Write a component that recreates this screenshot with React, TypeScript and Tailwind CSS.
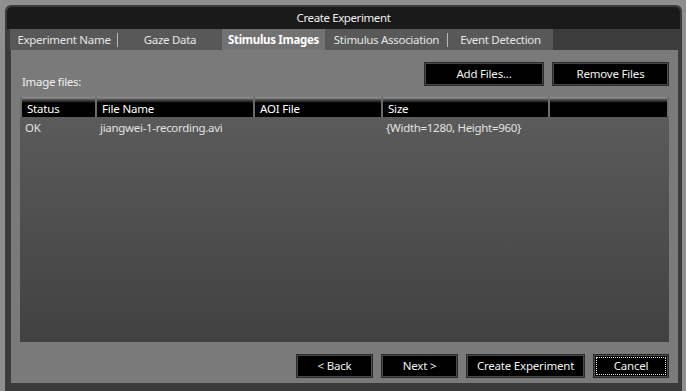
import React from "react";

const tabs = [
  { label: "Experiment Name", w: "w-[108px]", sep: true },
  { label: "Gaze Data", w: "w-[104px]", sep: false },
  { label: "Stimulus Images", w: "w-[103px]", sep: false, active: true },
  { label: "Stimulus Association", w: "w-[123px]", sep: true },
  { label: "Event Detection", w: "w-[105px]", sep: false },
];

const columns = [
  { label: "Status", w: "w-[75px]" },
  { label: "File Name", w: "w-[158px]" },
  { label: "AOI File", w: "w-[128px]" },
  { label: "Size", w: "w-[167px]" },
  { label: "", w: "flex-1" },
];

const DarkButton = ({ label, w, focused }: { label: string; w: string; focused?: boolean }) => (
  <button
    type="button"
    className={`relative ${w} h-[24px] bg-black border border-[#2a2a2a] shadow-[inset_0_0_0_1px_#4a4a4a] text-[11.5px] tracking-[-0.2px] text-[#f2f2f2] leading-none`}
  >
    {label}
    {focused && <span className="absolute inset-[2px] border border-dotted border-[#e0e0e0]" />}
  </button>
);

const App = () => {
  return (
    <div
      className="w-[686px] h-[391px] bg-[#8f8f8f] pt-[5px] pl-[5px] overflow-hidden"
      style={{ fontFamily: '"Noto Sans", "Open Sans", sans-serif' }}
    >
      <div className="w-[677px] h-[386px] bg-[#3b3b3b] rounded-t-[6px] flex flex-col pt-[2px] px-[2px]">
        {/* title bar */}
        <div className="h-[22px] bg-[#1a1a1a] rounded-t-[5px] flex items-center justify-center text-[11.5px] text-[#f0f0f0] tracking-[-0.4px]">
          Create Experiment
        </div>

        {/* tabs */}
        <div className="h-[21px] flex pl-[3px] bg-[#3c3c3c]">
          {tabs.map((t) => (
            <div
              key={t.label}
              className={`${t.w} h-full flex items-center justify-center relative text-[11.5px] tracking-[-0.3px] ${
                t.active ? "bg-[#727272] font-bold text-white" : "bg-[#585858] text-[#e6e6e6]"
              }`}
            >
              {t.label}
              {t.sep && <span className="absolute right-0 top-[4px] h-[14px] w-px bg-[#b8b8b8]" />}
            </div>
          ))}
        </div>

        {/* content panel */}
        <div className="w-[667px] ml-[4px] h-[333px] bg-[#7a7a7a] flex flex-col px-[9px] pt-[12px]">
          <div className="h-[23px] flex">
            <div className="mt-[12px] leading-[16px] text-[11.5px] tracking-[-0.3px] text-[#f0f0f0] pl-[2px]">Image files:</div>
            <div className="ml-auto flex gap-[8px]">
              <DarkButton label="Add Files..." w="w-[120px]" />
              <DarkButton label="Remove Files" w="w-[117px]" />
            </div>
          </div>

          {/* list */}
          <div className="mt-[12px] h-[245px] flex flex-col bg-[linear-gradient(to_bottom,#5d5d5d,#414141)]">
            <div className="h-[20px] flex bg-[linear-gradient(to_bottom,#9a9a9a_0px,#4a4a4a_3px,#000_6px,#000_100%)]">
              {columns.map((c, i) => (
                <div
                  key={i}
                  className={`${c.w} h-full flex items-center pl-[5px] text-[11.5px] tracking-[-0.2px] text-white border-l-2 border-[#6c6c6c] ${
                    i === columns.length - 1 ? "border-r-2" : ""
                  }`}
                >
                  <span className="mt-[3px]">{c.label}</span>
                </div>
              ))}
            </div>
            <div className="h-[22px] flex items-center text-[11.5px] tracking-[-0.3px] text-[#e2e2e2]">
              <div className="w-[75px] pl-[5px]">OK</div>
              <div className="w-[158px] pl-[5px]">jiangwei-1-recording.avi</div>
              <div className="w-[128px] pl-[5px]"></div>
              <div className="w-[167px] pl-[5px]">{"{Width=1280, Height=960}"}</div>
            </div>
          </div>

          {/* bottom buttons */}
          <div className="mt-[12px] flex justify-end gap-[8px]">
            <DarkButton label="< Back" w="w-[77px]" />
            <DarkButton label="Next >" w="w-[77px]" />
            <DarkButton label="Create Experiment" w="w-[119px]" />
            <DarkButton label="Cancel" w="w-[76px]" focused />
          </div>
        </div>
      </div>
    </div>
  );
};

export default App;
